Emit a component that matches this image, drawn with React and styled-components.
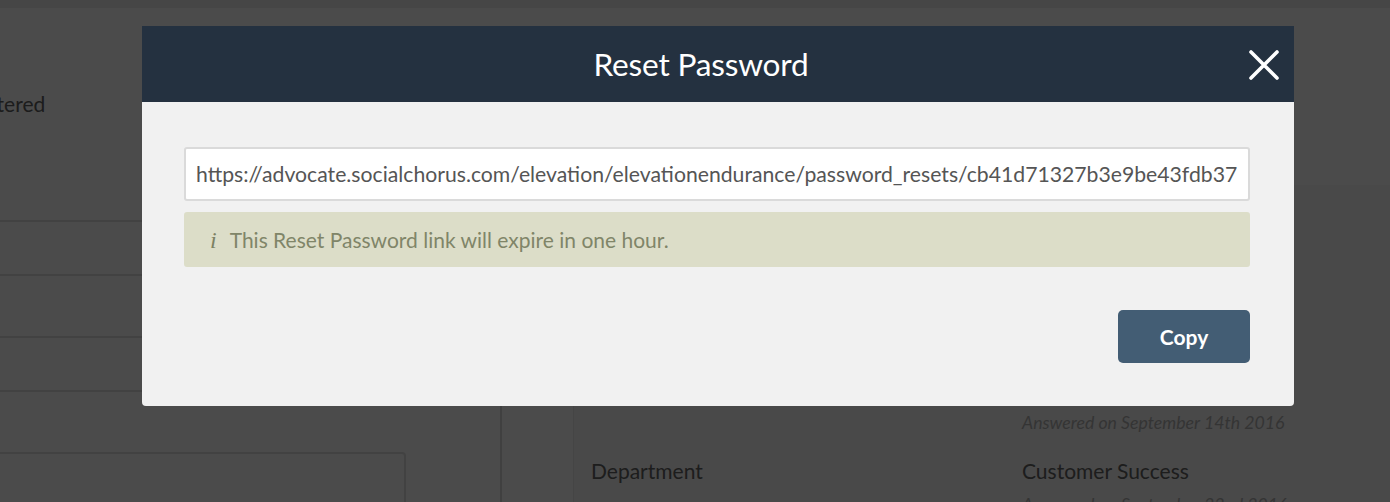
import React from "react";
import styled, { createGlobalStyle } from "styled-components";

const GlobalStyle = createGlobalStyle`
  html, body {
    margin: 0;
    padding: 0;
    overflow: hidden;
  }
  body {
    font-family: Lato, "Open Sans", "Liberation Sans", sans-serif;
    color: #555;
  }
  * {
    box-sizing: border-box;
  }
`;

const Page = styled.div`
  width: 1390px;
  height: 502px;
  background: #fafafa;
  display: flex;
  flex-direction: column;
  overflow: hidden;
`;

const TopBar = styled.div`
  height: 8px;
  background: #e9e9e9;
  flex-shrink: 0;
`;

const Content = styled.div`
  display: flex;
  flex: 1;
`;

const LeftColumn = styled.div`
  width: 502px;
  flex-shrink: 0;
  margin-top: 24px;
  border-right: 2px solid #d6d6d6;
  padding-top: 60px;
`;

const FieldLabel = styled.div`
  font-size: 21px;
  line-height: 24px;
  color: #5e5e5e;
  margin-left: -52px;
  margin-bottom: 104px;
`;

const Row = styled.div`
  height: ${(p) => p.$h}px;
  border-top: 2px solid #dcdcdc;
  margin-right: 20px;
`;

const TextBox = styled.div`
  width: 410px;
  height: 80px;
  margin-left: -4px;
  border: 2px solid #dcdcdc;
  border-radius: 4px;
`;

const RightArea = styled.div`
  flex: 1;
  padding-left: 71px;
  padding-top: 177px;
`;

const Panel = styled.div`
  height: 100%;
  background: #f4f4f4;
  border-left: 1px solid #e6e6e6;
  padding: 228px 0 0 17px;
`;

const Answered = styled.div`
  font-size: 17.7px;
  font-style: italic;
  line-height: 20px;
  color: #b0b0b0;
  margin-left: 431px;
  margin-bottom: ${(p) => p.$mb || 0}px;
`;

const InfoRow = styled.div`
  display: grid;
  grid-template-columns: 431px 1fr;
  font-size: 21px;
  line-height: 24px;
  color: #626262;
  margin-bottom: 12px;
`;

const Overlay = styled.div`
  position: fixed;
  inset: 0;
  background: rgba(0, 0, 0, 0.7);
  display: flex;
  justify-content: center;
  align-items: flex-start;
  padding: 26px 0 0 46px;
`;

const Modal = styled.div`
  width: 1152px;
  background: #f1f1f1;
  border-radius: 0 0 4px 4px;
  overflow: hidden;
`;

const Header = styled.div`
  position: relative;
  height: 76px;
  background: #243140;
  display: flex;
  align-items: center;
  justify-content: center;
`;

const Title = styled.h2`
  margin: 0 34px 0 0;
  font-size: 31.6px;
  font-weight: 400;
  color: #fff;
  letter-spacing: -0.2px;
`;

const CloseButton = styled.button`
  position: absolute;
  right: 14px;
  top: 23px;
  width: 32px;
  height: 32px;
  padding: 0;
  border: 0;
  background: none;
  cursor: pointer;
  display: flex;
  align-items: center;
  justify-content: center;
`;

const Body = styled.div`
  padding: 45px 44px 43px 42px;
  display: flex;
  flex-direction: column;
`;

const UrlInput = styled.input`
  width: 100%;
  height: 54px;
  border: 2px solid #dadada;
  border-radius: 3px;
  background: #fff;
  padding: 0 10px;
  font-family: Lato, "Open Sans", "Liberation Sans", sans-serif;
  font-size: 21.2px;
  color: #555;
  outline: none;
`;

const Notice = styled.div`
  margin-top: 11px;
  height: 55px;
  border-radius: 3px;
  background: #dcddc8;
  display: flex;
  align-items: center;
  padding-left: 26px;
  font-size: 21px;
  color: #808568;
`;

const InfoGlyph = styled.span`
  font-family: "Liberation Serif", "DejaVu Serif", serif;
  font-style: italic;
  font-size: 24px;
  color: #7d8264;
  margin-right: 13px;
  margin-top: 2px;
`;

const Footer = styled.div`
  display: flex;
  justify-content: flex-end;
  margin-top: 43px;
`;

const CopyButton = styled.button`
  width: 132px;
  height: 53px;
  border: 0;
  border-radius: 5px;
  background: #435d74;
  color: #fff;
  font-family: Lato, "Open Sans", "Liberation Sans", sans-serif;
  font-size: 21px;
  font-weight: 700;
  cursor: pointer;
`;

const resetUrl =
  "https://advocate.socialchorus.com/elevation/elevationendurance/password_resets/cb41d71327b3e9be43fdb37";

const App = () => {
  return (
    <>
      <GlobalStyle />
      <Page>
        <TopBar />
        <Content>
          <LeftColumn>
            <FieldLabel>Registered</FieldLabel>
            <Row $h={54} />
            <Row $h={62} />
            <Row $h={54} />
            <Row $h={62} />
            <TextBox />
          </LeftColumn>
          <RightArea>
            <Panel>
              <Answered $mb={26}>Answered on September 14th 2016</Answered>
              <InfoRow>
                <span>Department</span>
                <span>Customer Success</span>
              </InfoRow>
              <Answered>Answered on September 22nd 2016</Answered>
            </Panel>
          </RightArea>
        </Content>
      </Page>
      <Overlay>
        <Modal role="dialog" aria-label="Reset Password">
          <Header>
            <Title>Reset Password</Title>
            <CloseButton aria-label="Close">
              <svg width="32" height="32" viewBox="0 0 32 32">
                <path
                  d="M3 3 L29 29 M29 3 L3 29"
                  stroke="#fff"
                  strokeWidth="3.6"
                  strokeLinecap="round"
                />
              </svg>
            </CloseButton>
          </Header>
          <Body>
            <UrlInput readOnly value={resetUrl} />
            <Notice>
              <InfoGlyph>i</InfoGlyph>
              This Reset Password link will expire in one hour.
            </Notice>
            <Footer>
              <CopyButton>Copy</CopyButton>
            </Footer>
          </Body>
        </Modal>
      </Overlay>
    </>
  );
};

export default App;
